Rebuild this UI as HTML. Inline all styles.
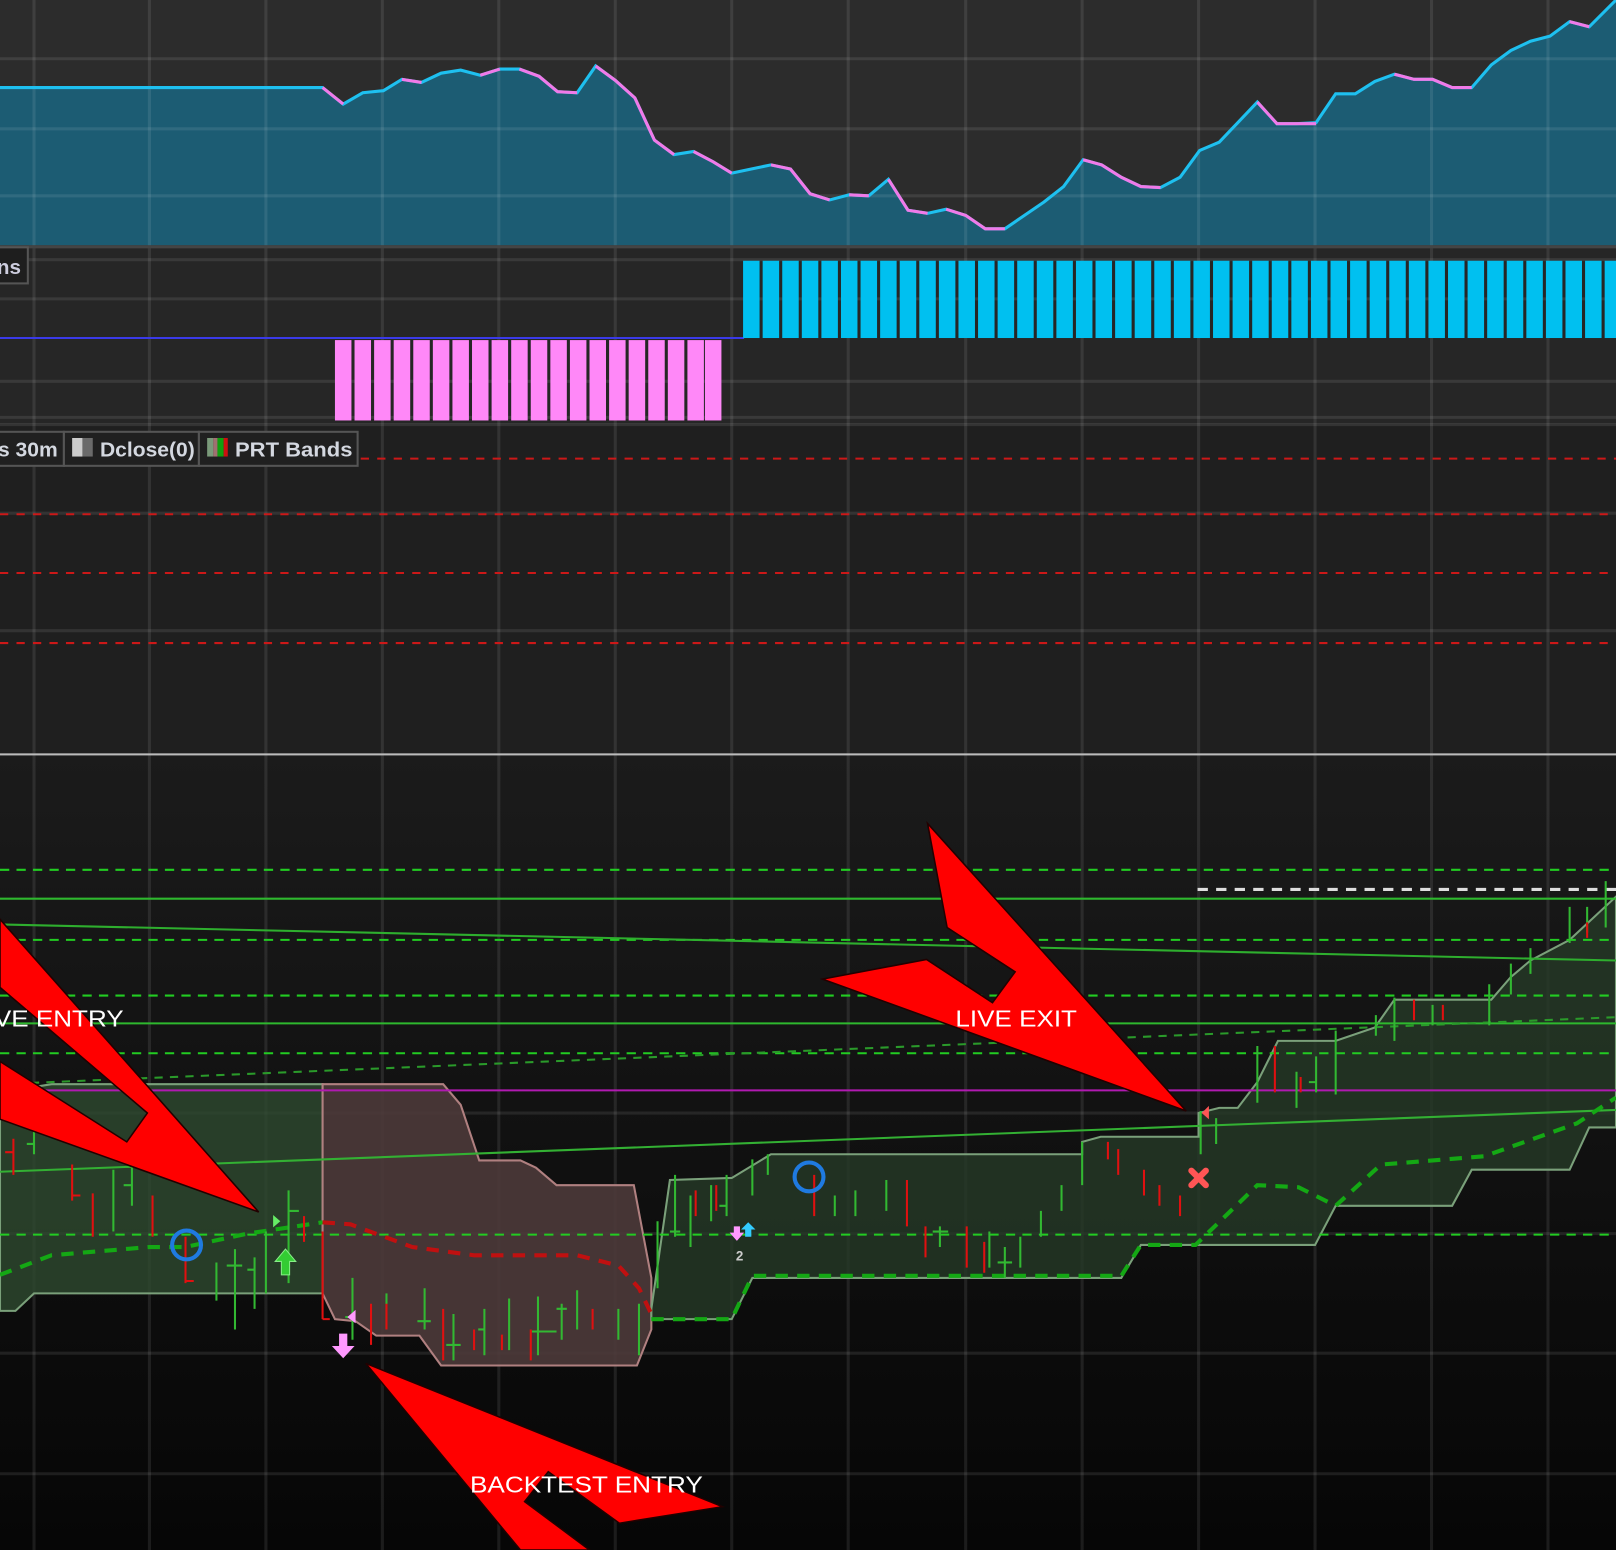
<!DOCTYPE html>
<html><head><meta charset="utf-8"><style>
html,body{margin:0;padding:0;background:#0a0a0a;overflow:hidden}
svg{display:block}
text{font-family:"Liberation Sans",sans-serif}
</style></head><body>
<svg width="1616" height="1550" viewBox="0 0 1568 1504" preserveAspectRatio="none" xmlns="http://www.w3.org/2000/svg">
<defs>
<linearGradient id="bg" x1="0" y1="0" x2="0" y2="1">
<stop offset="0" stop-color="#1b1b1b"/><stop offset="1" stop-color="#060606"/>
</linearGradient>
</defs>
<rect x="0" y="0" width="1568" height="240" fill="#2c2c2c"/>
<rect x="0" y="240" width="1568" height="172" fill="#262626"/>
<rect x="0" y="412" width="1568" height="320" fill="#1f1f1f"/>
<rect x="0" y="732" width="1568" height="772" fill="url(#bg)"/>
<polygon fill="#1a6580" fill-opacity="0.85" points="0,85 313,85 333,101 352,90 372,88 390,77 409,80 428,71 447,68 466,73 485,67 504,67 523,74 541,89 560,90 578,64 597,78 616,95 635,136 654,150 673,147 692,157 710,168 729,164 748,160 767,164 786,188 805,194 824,189 843,190 862,174 881,204 900,207 918,203 937,209 956,222 975,222 994,209 1013,196 1032,181 1051,155 1069,160 1088,172 1107,181 1126,182 1145,172 1164,146 1183,138 1201,119 1220,99 1239,120 1258,120 1277,119 1296,91 1315,91 1334,79 1353,72 1372,77 1390,77 1409,85 1428,85 1447,63 1466,49 1485,40 1504,35 1523,21 1542,26 1568,0 1568,238 0,238"/>
<g stroke="#ffffff" stroke-opacity="0.09" stroke-width="3">
<path d="M0 57H1568M0 125H1568M0 190H1568M0 252H1568M0 290H1568M0 370H1568M0 405H1568M0 412H1568M0 498H1568M0 612H1568M0 1080H1568M0 1197H1568M0 1313H1568M0 1430H1568"/>
<path d="M33 0V1504M145 0V1504M258 0V1504M371 0V1504M484 0V1504M597 0V1504M710 0V1504M823 0V1504M937 0V1504M1050 0V1504M1163 0V1504M1276 0V1504M1389 0V1504M1502 0V1504"/>
</g>
<polyline fill="none" stroke="#1ec0f0" stroke-width="3" points="0,85 313,85 333,101 352,90 372,88 390,77 409,80 428,71 447,68 466,73 485,67 504,67 523,74 541,89 560,90 578,64 597,78 616,95 635,136 654,150 673,147 692,157 710,168 729,164 748,160 767,164 786,188 805,194 824,189 843,190 862,174 881,204 900,207 918,203 937,209 956,222 975,222 994,209 1013,196 1032,181 1051,155 1069,160 1088,172 1107,181 1126,182 1145,172 1164,146 1183,138 1201,119 1220,99 1239,120 1258,120 1277,119 1296,91 1315,91 1334,79 1353,72 1372,77 1390,77 1409,85 1428,85 1447,63 1466,49 1485,40 1504,35 1523,21 1542,26 1568,0"/>
<g fill="none" stroke="#f07ae8" stroke-width="3">
<polyline points="313,85 333,101"/><polyline points="390,77 409,80"/><polyline points="466,73 485,67"/>
<polyline points="504,67 523,74 541,89 560,90"/><polyline points="578,64 597,78 616,95 635,136 654,150"/><polyline points="673,147 692,157 710,168"/>
<polyline points="748,160 767,164 786,188 805,194"/><polyline points="824,189 843,190"/><polyline points="862,174 881,204 900,207"/><polyline points="918,203 937,209 956,222 975,222"/>
<polyline points="1051,155 1069,160 1088,172 1107,181 1126,182"/><polyline points="1220,99 1239,120 1277,120"/><polyline points="1353,72 1372,77 1390,77 1409,85 1428,85"/><polyline points="1523,21 1542,26"/>
</g>
<rect x="0" y="238" width="1568" height="3" fill="#444"/>
<line x1="0" y1="328" x2="722" y2="328" stroke="#3a3ae8" stroke-width="2"/>
<g fill="#00c0f0">
<rect x="721" y="253" width="16" height="75"/><rect x="740" y="253" width="16" height="75"/><rect x="759" y="253" width="16" height="75"/><rect x="778" y="253" width="16" height="75"/><rect x="797" y="253" width="16" height="75"/><rect x="816" y="253" width="16" height="75"/><rect x="835" y="253" width="16" height="75"/><rect x="854" y="253" width="16" height="75"/><rect x="873" y="253" width="16" height="75"/><rect x="892" y="253" width="16" height="75"/><rect x="911" y="253" width="16" height="75"/><rect x="930" y="253" width="16" height="75"/><rect x="949" y="253" width="16" height="75"/><rect x="968" y="253" width="16" height="75"/><rect x="987" y="253" width="16" height="75"/><rect x="1006" y="253" width="16" height="75"/><rect x="1025" y="253" width="16" height="75"/><rect x="1044" y="253" width="16" height="75"/><rect x="1063" y="253" width="16" height="75"/><rect x="1082" y="253" width="16" height="75"/><rect x="1101" y="253" width="16" height="75"/><rect x="1120" y="253" width="16" height="75"/><rect x="1139" y="253" width="16" height="75"/><rect x="1158" y="253" width="16" height="75"/><rect x="1177" y="253" width="16" height="75"/><rect x="1196" y="253" width="16" height="75"/><rect x="1215" y="253" width="16" height="75"/><rect x="1234" y="253" width="16" height="75"/><rect x="1253" y="253" width="16" height="75"/><rect x="1272" y="253" width="16" height="75"/><rect x="1291" y="253" width="16" height="75"/><rect x="1310" y="253" width="16" height="75"/><rect x="1329" y="253" width="16" height="75"/><rect x="1348" y="253" width="16" height="75"/><rect x="1367" y="253" width="16" height="75"/><rect x="1386" y="253" width="16" height="75"/><rect x="1405" y="253" width="16" height="75"/><rect x="1424" y="253" width="16" height="75"/><rect x="1443" y="253" width="16" height="75"/><rect x="1462" y="253" width="16" height="75"/><rect x="1481" y="253" width="16" height="75"/><rect x="1500" y="253" width="16" height="75"/><rect x="1519" y="253" width="16" height="75"/><rect x="1538" y="253" width="16" height="75"/><rect x="1557" y="253" width="16" height="75"/>
</g>
<g fill="#ff88f8">
<rect x="325" y="330" width="16" height="78"/><rect x="344" y="330" width="16" height="78"/><rect x="363" y="330" width="16" height="78"/><rect x="382" y="330" width="16" height="78"/><rect x="401" y="330" width="16" height="78"/><rect x="420" y="330" width="16" height="78"/><rect x="439" y="330" width="16" height="78"/><rect x="458" y="330" width="16" height="78"/><rect x="477" y="330" width="16" height="78"/><rect x="496" y="330" width="16" height="78"/><rect x="515" y="330" width="16" height="78"/><rect x="534" y="330" width="16" height="78"/><rect x="553" y="330" width="16" height="78"/><rect x="572" y="330" width="16" height="78"/><rect x="591" y="330" width="16" height="78"/><rect x="610" y="330" width="16" height="78"/><rect x="629" y="330" width="16" height="78"/><rect x="648" y="330" width="16" height="78"/><rect x="667" y="330" width="16" height="78"/><rect x="684" y="330" width="16" height="78"/>
</g>
<rect x="-2" y="240" width="29" height="35" fill="#1e1e1e" stroke="#555" stroke-width="2"/>
<text x="-3" y="266" font-size="20" font-weight="bold" fill="#ccd">ns</text>
<g stroke="#cc1818" stroke-width="2" stroke-dasharray="8,8">
<path d="M350 445H1568M0 499H1568M0 556H1568M0 624H1568"/>
</g>
<rect x="-2" y="419" width="64" height="33" fill="#202020" stroke="#555" stroke-width="2"/>
<rect x="62" y="419" width="131" height="33" fill="#202020" stroke="#555" stroke-width="2"/>
<rect x="193" y="419" width="154" height="33" fill="#202020" stroke="#555" stroke-width="2"/>
<text x="-2" y="443" font-size="20" font-weight="bold" fill="#d4d8e0" textLength="58" lengthAdjust="spacingAndGlyphs">s 30m</text>
<rect x="70" y="425" width="10" height="18" fill="#ccc"/><rect x="80" y="425" width="10" height="18" fill="#6a6a6a"/>
<text x="97" y="443" font-size="20" font-weight="bold" fill="#d4d8e0" textLength="92" lengthAdjust="spacingAndGlyphs">Dclose(0)</text>
<rect x="201" y="425" width="6" height="18" fill="#7a9a7a"/><rect x="207" y="425" width="4" height="18" fill="#a07070"/><rect x="211" y="425" width="6" height="18" fill="#10a010"/><rect x="217" y="425" width="4" height="18" fill="#cc1010"/>
<text x="228" y="443" font-size="20" font-weight="bold" fill="#d4d8e0" textLength="114" lengthAdjust="spacingAndGlyphs">PRT Bands</text>
<rect x="0" y="731" width="1568" height="2" fill="#bbb"/>
<polygon fill="#2e4a30" fill-opacity="0.8" stroke="#7aa07a" stroke-width="2" points="0,1060 50,1052 313,1052 313,1255 33,1255 15,1272 0,1272"/>
<polygon fill="#4c3a3a" fill-opacity="0.9" stroke="#b08080" stroke-width="2" points="313,1052 430,1052 447,1072 465,1126 505,1126 520,1133 540,1150 615,1150 632,1240 632,1290 618,1325 428,1325 407,1296 365,1296 345,1282 325,1280 313,1255"/>
<polygon fill="#253a27" fill-opacity="0.8" stroke="#7aa07a" stroke-width="2" points="632,1270 650,1145 710,1143 748,1120 1050,1120 1050,1108 1068,1103 1163,1103 1163,1080 1183,1075 1201,1075 1220,1050 1240,1010 1296,1010 1334,997 1353,970 1447,970 1466,948 1485,932 1523,912 1568,870 1568,1094 1542,1094 1523,1135 1428,1135 1409,1170 1296,1170 1276,1208 1107,1208 1088,1240 730,1240 710,1280 632,1280"/>
<g stroke="#22cc22" stroke-width="2" stroke-dasharray="9,7">
<path d="M0 844H1568M0 912H1568M0 966H1568M0 1022H1568M0 1198H1568"/>
</g>
<path d="M0 872H1568M0 993H1568" stroke="#2eb82e" stroke-width="2"/>
<path d="M1162 863H1568" stroke="#ddd" stroke-width="3" stroke-dasharray="10,8"/>
<path d="M0 1058H1568" stroke="#b01ab0" stroke-width="2"/>
<path d="M0 897L1568 932" stroke="#2eae2e" stroke-width="2"/>
<path d="M0 1052L1568 987" stroke="#2a9a2a" stroke-width="2" stroke-dasharray="8,7"/>
<path d="M0 1137L1568 1077" stroke="#33b033" stroke-width="2"/>
<polyline fill="none" stroke="#14a814" stroke-width="4" stroke-dasharray="12,9" points="0,1237 50,1218 145,1210 180,1210 240,1197 300,1188 313,1186"/>
<polyline fill="none" stroke="#c01010" stroke-width="4" stroke-dasharray="12,9" points="313,1186 340,1188 400,1210 460,1218 560,1218 600,1228 620,1250 632,1275"/>
<polyline fill="none" stroke="#14a814" stroke-width="4" stroke-dasharray="12,9" points="632,1280 710,1280 730,1238 1088,1238 1107,1208 1160,1208 1220,1150 1260,1152 1296,1170 1340,1130 1440,1122 1530,1090 1568,1065"/>
<path fill="none" stroke="#32b832" stroke-width="2" d="M33 1062V1120M26 1110H33M110 1135V1195M128 1130V1170M120 1150H128M210 1225V1262M228 1212V1290M220 1228H235M247 1220V1270M240 1232H247M258 1195V1255M280 1155V1245M280 1175H290M342 1240V1300M335 1278H342M375 1255V1290M412 1250V1290M405 1282H418M440 1275V1320M433 1305H447M470 1270V1315M464 1290H470M494 1260V1310M522 1258V1315M516 1292H540M545 1265V1300M540 1270H550M560 1252V1290M600 1270V1300M620 1265V1315M638 1185V1250M655 1140V1200M650 1195H660M670 1160V1210M690 1150V1185M705 1140V1180M698 1170H705M730 1125V1160M745 1120V1140M810 1160V1180M830 1155V1180M860 1145V1175M912 1190V1210M905 1195H920M960 1195V1230M975 1210V1240M968 1225H982M990 1200V1230M1010 1175V1200M1030 1150V1175M1050 1108V1150M1165 1078V1120M1180 1085V1110M1220 1015V1070M1258 1040V1075M1277 1025V1060M1270 1050H1277M1296 1000V1062M1335 985V1005M1353 968V1010M1390 975V995M1445 955V995M1466 935V965M1485 920V945M1523 880V915M1540 880V905M1558 855V900"/>
<path fill="none" stroke="#e01010" stroke-width="2" d="M13 1105V1140M5 1118H13M70 1130V1165M70 1160H78M90 1158V1200M148 1160V1200M180 1200V1245M180 1243H188M295 1180V1205M313 1195V1280M313 1280H320M360 1265V1305M375 1265V1290M430 1270V1320M460 1290V1310M487 1295V1310M515 1290V1320M575 1270V1290M675 1155V1180M695 1150V1175M790 1140V1180M880 1145V1190M898 1190V1220M938 1190V1230M955 1205V1235M1075 1108V1125M1085 1115V1140M1110 1135V1160M1125 1150V1170M1145 1160V1180M1237 1015V1060M1262 1045V1060M1372 970V990M1400 975V990M1540 895V910"/>
<circle cx="181" cy="1208" r="14" fill="none" stroke="#1f7ae0" stroke-width="4"/>
<circle cx="785" cy="1142" r="14" fill="none" stroke="#1f7ae0" stroke-width="4"/>
<polygon fill="#33cc33" stroke="#88ee88" points="277,1212 287,1224 281,1224 281,1237 273,1237 273,1224 267,1224"/>
<polygon fill="#ff99ff" points="329,1294 337,1294 337,1306 344,1306 333,1318 322,1306 329,1306"/>
<polygon fill="#ff99ff" points="345,1271 345,1284 337,1278"/>
<polygon fill="#66ee66" points="265,1179 272,1185 265,1191"/>
<polygon fill="#ff99ff" points="712,1190 718,1190 718,1196 722,1196 715,1204 708,1196 712,1196"/>
<polygon fill="#33ccff" points="726,1186 733,1193 729,1193 729,1200 723,1200 723,1193 719,1193"/>
<text x="714" y="1223" font-size="13" font-weight="bold" fill="#ccc">2</text>
<polygon fill="#ff5555" points="1173,1073 1173,1086 1166,1080"/>
<g stroke="#ff5555" stroke-width="6" stroke-linecap="round"><path d="M1156 1136L1170 1150M1170 1136L1156 1150"/></g>
<g fill="#ff0000" stroke="#200" stroke-width="1.5">
<polygon points="0,892 251,1176 0,1086 0,1030 123,1108 143,1080 0,958"/>
<polygon points="1151,1078 900,799 919,900 985,943 963,973 899,931 798,950"/>
<polygon points="355,1323 701,1462 601,1478 532,1428 509,1457 572,1504 505,1504"/>
</g>
<g fill="#fff" font-size="22">
<text x="-6" y="996" textLength="126" lengthAdjust="spacingAndGlyphs">VE ENTRY</text>
<text x="927" y="996" textLength="118" lengthAdjust="spacingAndGlyphs">LIVE EXIT</text>
<text x="456" y="1448" textLength="226" lengthAdjust="spacingAndGlyphs">BACKTEST ENTRY</text>
</g>
</svg>
</body></html>
